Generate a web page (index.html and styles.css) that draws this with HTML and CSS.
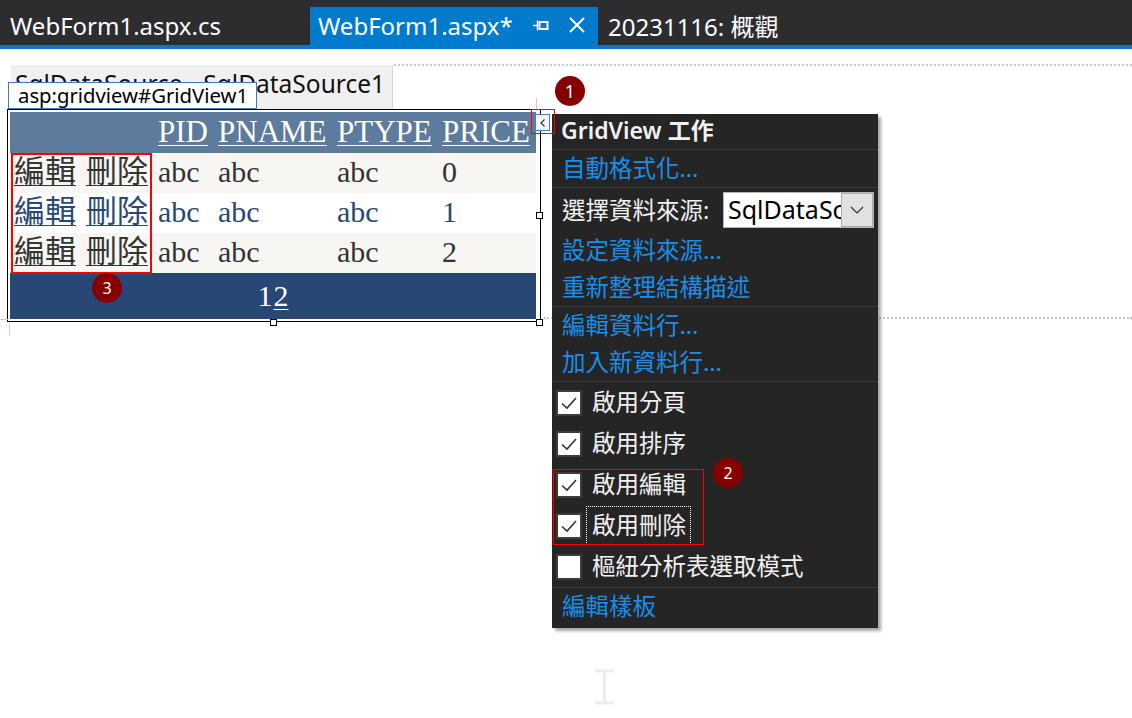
FILE: index.html
```
<!DOCTYPE html>
<html lang="zh-Hant">
<head>
<meta charset="utf-8">
<title>WebForm1.aspx</title>
<link rel="stylesheet" href="styles.css">
</head>
<body>
<div class="tabbar">
  <div class="tab tab-cs">WebForm1.aspx.cs</div>
  <div class="tab tab-active">
    <span class="tab-title">WebForm1.aspx*</span>
    <svg class="pin" width="16" height="12" viewBox="0 0 16 12"><path d="M0 6.5H4M4.5 1.5V11.5" stroke="#fff" stroke-width="1.5" fill="none"/><rect x="6.5" y="3" width="8" height="7" stroke="#fff" stroke-width="2" fill="none"/></svg>
    <svg class="close" width="18" height="18" viewBox="0 0 18 18"><path d="M2 2L16 16M16 2L2 16" stroke="#fff" stroke-width="2" fill="none"/></svg>
  </div>
  <div class="tab tab-overview">20231116: 概觀</div>
</div>
<div class="tabline"></div>

<div class="canvas">
  <div class="guide-dot guide-top"></div>
  <div class="guide-dot guide-bottom"></div>
  <div class="guide-pink guide-pink-v1"></div>
  <div class="guide-pink guide-pink-v2"></div>
  <div class="guide-pink guide-pink-h1"></div>

  <div class="sqlds">SqlDataSource - SqlDataSource1</div>
  <div class="gv-tag">asp:gridview#GridView1</div>

  <div class="gv-frame">
    <table class="gv">
      <tr class="gv-head">
        <th class="c1"></th>
        <th class="c2"><a>PID</a></th>
        <th class="c3"><a>PNAME</a></th>
        <th class="c4"><a>PTYPE</a></th>
        <th class="c5"><a>PRICE</a></th>
      </tr>
      <tr class="gv-row">
        <td class="c1"><a>編輯</a><a>刪除</a></td>
        <td>abc</td><td>abc</td><td>abc</td><td>0</td>
      </tr>
      <tr class="gv-alt">
        <td class="c1"><a>編輯</a><a>刪除</a></td>
        <td>abc</td><td>abc</td><td>abc</td><td>1</td>
      </tr>
      <tr class="gv-row">
        <td class="c1"><a>編輯</a><a>刪除</a></td>
        <td>abc</td><td>abc</td><td>abc</td><td>2</td>
      </tr>
      <tr class="gv-pager">
        <td colspan="5"><span>1</span><a>2</a></td>
      </tr>
    </table>
  </div>

  <div class="handle h-right"></div>
  <div class="handle h-bottom"></div>
  <div class="handle h-corner"></div>

  <div class="smart-btn">
    <svg width="12" height="14" viewBox="0 0 12 14"><path d="M7.5 3.5L4 7L7.5 10.5" stroke="#333" stroke-width="1.2" fill="none"/></svg>
  </div>

  <div class="panel">
    <div class="p-sec p-title">GridView 工作</div>
    <div class="p-sec">
      <div class="p-item p-link">自動格式化...</div>
    </div>
    <div class="p-sec">
      <div class="p-item p-select-row">
        <span>選擇資料來源:</span>
        <div class="select"><span class="select-text">SqlDataSc</span><span class="select-btn"><svg width="14" height="8" viewBox="0 0 14 8"><path d="M1 1L7 7L13 1" stroke="#333" stroke-width="1.2" fill="none"/></svg></span></div>
      </div>
      <div class="p-item p-link">設定資料來源...</div>
      <div class="p-item p-link">重新整理結構描述</div>
    </div>
    <div class="p-sec">
      <div class="p-item p-link">編輯資料行...</div>
      <div class="p-item p-link">加入新資料行...</div>
    </div>
    <div class="p-sec">
      <div class="p-check"><span class="box"><svg width="22" height="22" viewBox="0 0 22 22"><path d="M4 11.5L9 16L18 6" stroke="#333" stroke-width="1.6" fill="none"/></svg></span><span class="lbl">啟用分頁</span></div>
      <div class="p-check"><span class="box"><svg width="22" height="22" viewBox="0 0 22 22"><path d="M4 11.5L9 16L18 6" stroke="#333" stroke-width="1.6" fill="none"/></svg></span><span class="lbl">啟用排序</span></div>
      <div class="p-check"><span class="box"><svg width="22" height="22" viewBox="0 0 22 22"><path d="M4 11.5L9 16L18 6" stroke="#333" stroke-width="1.6" fill="none"/></svg></span><span class="lbl">啟用編輯</span></div>
      <div class="p-check"><span class="box"><svg width="22" height="22" viewBox="0 0 22 22"><path d="M4 11.5L9 16L18 6" stroke="#333" stroke-width="1.6" fill="none"/></svg></span><span class="lbl focus">啟用刪除</span></div>
      <div class="p-check"><span class="box"></span><span class="lbl">樞紐分析表選取模式</span></div>
    </div>
    <div class="p-sec p-last">
      <div class="p-item p-link">編輯樣板</div>
    </div>
  </div>

  <div class="mark mark-1"></div>
  <div class="mark mark-2"></div>
  <div class="mark mark-3"></div>

  <div class="badge badge-1">1</div>
  <div class="badge badge-2">2</div>
  <div class="badge badge-3">3</div>

  <svg class="ibeam" width="20" height="36" viewBox="0 0 20 36"><path d="M0 2H19M9.5 2V34M0 34H19" stroke="#ececec" stroke-width="3" fill="none"/></svg>
</div>
</body>
</html>
```
FILE: styles.css
```
* { box-sizing: border-box; }
html, body { margin: 0; padding: 0; background: #fff; }
body {
  width: 1132px;
  height: 718px;
  overflow: hidden;
  font-family: "Noto Sans", "Noto Sans CJK TC", sans-serif;
}

/* ---------- tab bar ---------- */
.tabbar {
  height: 45px;
  background: #2d2d30;
  display: flex;
  align-items: flex-end;
}
.tab {
  height: 38px;
  display: flex;
  align-items: center;
  color: #fff;
  font-size: 24px;
  white-space: nowrap;
  padding-bottom: 2px;
}
.tab-cs { width: 310px; padding-left: 10px; }
.tab-active {
  width: 288px;
  background: #007acc;
  padding-left: 8px;
}
.tab-title { width: 215px; }
.close { margin-left: 19px; }
.tab-overview { padding-left: 10px; }
.tabline { height: 4px; background: #007acc; }

/* ---------- design surface ---------- */
.canvas {
  position: relative;
  height: 669px;
  padding-top: 16px;
}
.guide-dot {
  position: absolute;
  height: 0;
  border-top: 2px dotted #c8c8c8;
  right: 0;
}
.guide-top { top: 15px; left: 394px; }
.guide-bottom { top: 268px; left: 544px; }
.guide-pink { position: absolute; background: #e0c4c8; }
.guide-pink-v1 { left: 536px; top: 49px; width: 1px; height: 11px; }
.guide-pink-v2 { left: 9px; top: 274px; width: 1px; height: 12px; }
.guide-pink-h1 { left: 0; top: 270px; width: 8px; height: 1px; }

.sqlds {
  margin-left: 11px;
  width: 382px;
  height: 44px;
  background: #f0f0f0;
  border-right: 1px solid #d8d8d8;
  color: #111;
  font-size: 24.5px;
  line-height: 30px;
  padding: 4px 0 0 4px;
  white-space: nowrap;
  overflow: hidden;
}
.gv-tag {
  position: absolute;
  left: 8px;
  top: 33px;
  width: 249px;
  height: 27px;
  background: #fff;
  border: 1px solid #3a78c9;
  color: #000;
  font-size: 20.3px;
  line-height: 24px;
  padding-left: 9px;
  white-space: nowrap;
}

.gv-frame {
  margin-left: 7px;
  width: 534px;
  border: 1px solid #000;
  padding: 2px;
}
.gv {
  border-collapse: collapse;
  width: 526px;
  font-family: "Liberation Serif", "Noto Sans CJK TC", serif;
  font-size: 30px;
}
.gv th, .gv td {
  padding: 0 0 2px 4px;
  text-align: left;
  font-weight: normal;
  vertical-align: middle;
  white-space: nowrap;
  line-height: 34px;
}
.gv a { text-decoration: underline; text-decoration-thickness: 1px; text-underline-offset: 3px; }
.gv .c1 { width: 144px; }
.gv .c2 { width: 60px; }
.gv .c3 { width: 119px; }
.gv .c4 { width: 105px; }
.gv .c5 { width: 98px; }
.gv td.c1 a {
  font-size: 31px;
  display: inline-block;
  line-height: 34px;
  height: 34px;
  vertical-align: top;
}
.gv td.c1 a + a { margin-left: 10px; }

.gv-head { height: 41px; background: #5d7b9d; color: #fff; }
.gv-head th { font-size: 31px; height: 41px; }
.gv-row td, .gv-alt td { height: 40px; }
.gv-row { background: #f7f6f3; color: #333; }
.gv-alt { background: #fff; color: #284775; }
.gv-pager { background: #284775; color: #fff; }
.gv-pager td { text-align: center; padding: 0; height: 46px; }
.gv-pager a { margin-left: 1px; }

.handle {
  position: absolute;
  width: 7px;
  height: 7px;
  background: #fff;
  border: 1px solid #000;
}
.h-right { left: 536px; top: 163px; }
.h-bottom { left: 270px; top: 270px; }
.h-corner { left: 536px; top: 270px; }

.smart-btn {
  position: absolute;
  left: 535px;
  top: 65px;
  width: 15px;
  height: 17px;
  background: #f4f6fa;
  border: 1px solid #4a7cc8;
  display: flex;
  align-items: center;
  justify-content: center;
}
.mark { position: absolute; z-index: 5; border: 1px solid #ff0000; }
.mark-1 { left: 531px; top: 60px; width: 24px; height: 25px; }
.mark-2 { left: 553px; top: 420px; width: 151px; height: 76px; }
.mark-3 { left: 11px; top: 104px; width: 141px; height: 121px; border-width: 2px; }

.badge {
  position: absolute;
  z-index: 6;
  width: 30px;
  height: 30px;
  border-radius: 50%;
  background: #860000;
  color: #fff;
  font-family: "Noto Sans", sans-serif;
  font-size: 16px;
  line-height: 30px;
  text-align: center;
}
.badge-1 { left: 555px; top: 27px; font-size: 18px; }
.badge-2 { left: 713px; top: 409px; }
.badge-3 { left: 92px; top: 224px; }

/* ---------- smart tag panel ---------- */
.panel {
  position: absolute;
  left: 552px;
  top: 65px;
  width: 326px;
  height: 514px;
  background: #252526;
  color: #f1f1f1;
  font-family: "Noto Sans", "Noto Sans CJK TC", sans-serif;
  font-size: 23.5px;
  box-shadow: 3px 3px 3px rgba(0, 0, 0, 0.35);
  display: flex;
  flex-direction: column;
}
.p-sec { border-bottom: 1px solid #3b3b3f; }
.p-last { border-bottom: none; }
.p-title {
  height: 36px;
  padding-left: 9px;
  line-height: 32px;
  font-weight: 600;
  font-size: 23px;
}
.p-item {
  height: 37px;
  display: flex;
  align-items: center;
  padding: 0 0 4px 10px;
  white-space: nowrap;
}
.p-link { color: #1a8ee6; }
.p-select-row { height: 44px; padding: 0 4px 0 10px; }
.p-select-row > span { padding-bottom: 3px; }
.select {
  margin-left: auto;
  width: 151px;
  height: 36px;
  background: #fff;
  border: 1px solid #b5b5b5;
  display: flex;
  align-items: stretch;
  overflow: hidden;
}
.select-text {
  width: 118px;
  color: #000;
  padding-left: 4px;
  font-size: 25px;
  line-height: 32px;
  overflow: hidden;
  white-space: nowrap;
}
.select-btn {
  width: 32px;
  background: #e1e1e1;
  border: 1px solid #acacac;
  display: flex;
  align-items: center;
  justify-content: center;
}
.p-check {
  height: 41px;
  display: flex;
  align-items: center;
  padding-left: 6px;
}
.box {
  width: 22px;
  height: 22px;
  background: #fff;
  box-shadow: 0 0 0 2px #3c3c3e;
  display: block;
}
.box svg { display: block; }
.lbl { margin-left: 12px; white-space: nowrap; padding-bottom: 4px; }
.lbl.focus {
  border: 1px dotted #fff;
  padding: 0 4px 3px 5px;
  margin-left: 6px;
}
.p-last .p-item { height: 38px; }

.ibeam { position: absolute; left: 595px; top: 620px; }
```
